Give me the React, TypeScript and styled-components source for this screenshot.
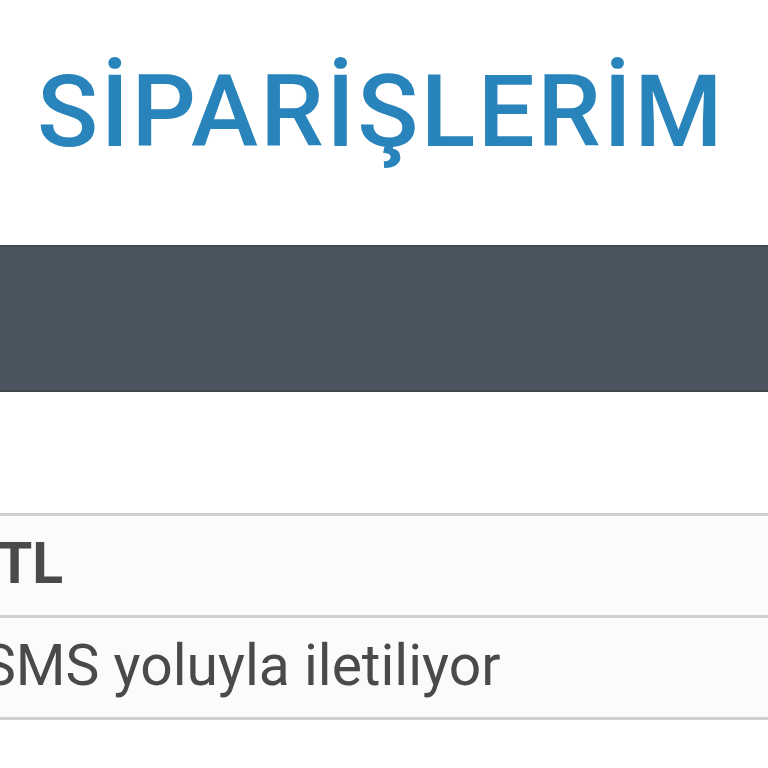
import React from 'react'
import styled, { createGlobalStyle } from 'styled-components'

const GlobalStyle = createGlobalStyle`
  html, body {
    margin: 0;
    padding: 0;
    background: #ffffff;
    font-family: Roboto, "Liberation Sans", sans-serif;
    overflow: hidden;
  }
`

const Page = styled.div`
  width: 768px;
  height: 768px;
  overflow: hidden;
  display: flex;
  flex-direction: column;
`

const Title = styled.h1`
  margin: 0;
  padding: 52px 6px 0 0;
  height: 245px;
  flex-shrink: 0;
  box-sizing: border-box;
  text-align: center;
  font-size: 101px;
  line-height: 120px;
  font-weight: 500;
  color: #2984bb;
  letter-spacing: 2.4px;
`

const Bar = styled.div`
  height: 147px;
  flex-shrink: 0;
  background: #4b555f;
  border-top: 2px solid #424a52;
  border-bottom: 2px solid #42474c;
  box-sizing: border-box;
`

const Spacer = styled.div`
  height: 121px;
  flex-shrink: 0;
`

const Table = styled.div`
  display: flex;
  flex-direction: column;
  border-top: 3px solid #cfcfcf;
`

const Row = styled.div`
  height: 102px;
  flex-shrink: 0;
  box-sizing: border-box;
  padding-top: 20px;
  background: #fbfbfb;
  border-bottom: 3px solid #cfcfcf;
  display: flex;
  align-items: flex-start;
  overflow: hidden;
`

const Cell = styled.span<{ bold?: boolean; shift: number }>`
  margin-left: ${({ shift }) => shift}px;
  white-space: nowrap;
  font-size: 57px;
  line-height: 56px;
  font-weight: ${({ bold }) => (bold ? 700 : 400)};
  color: #4a4a4a;
`

export default function App() {
  return (
    <Page>
      <GlobalStyle />
      <Title>SİPARİŞLERİM</Title>
      <Bar />
      <Spacer />
      <Table>
        <Row>
          <Cell bold shift={-3}>TL</Cell>
        </Row>
        <Row>
          <Cell shift={-18}>SMS yoluyla iletiliyor</Cell>
        </Row>
      </Table>
    </Page>
  )
}
